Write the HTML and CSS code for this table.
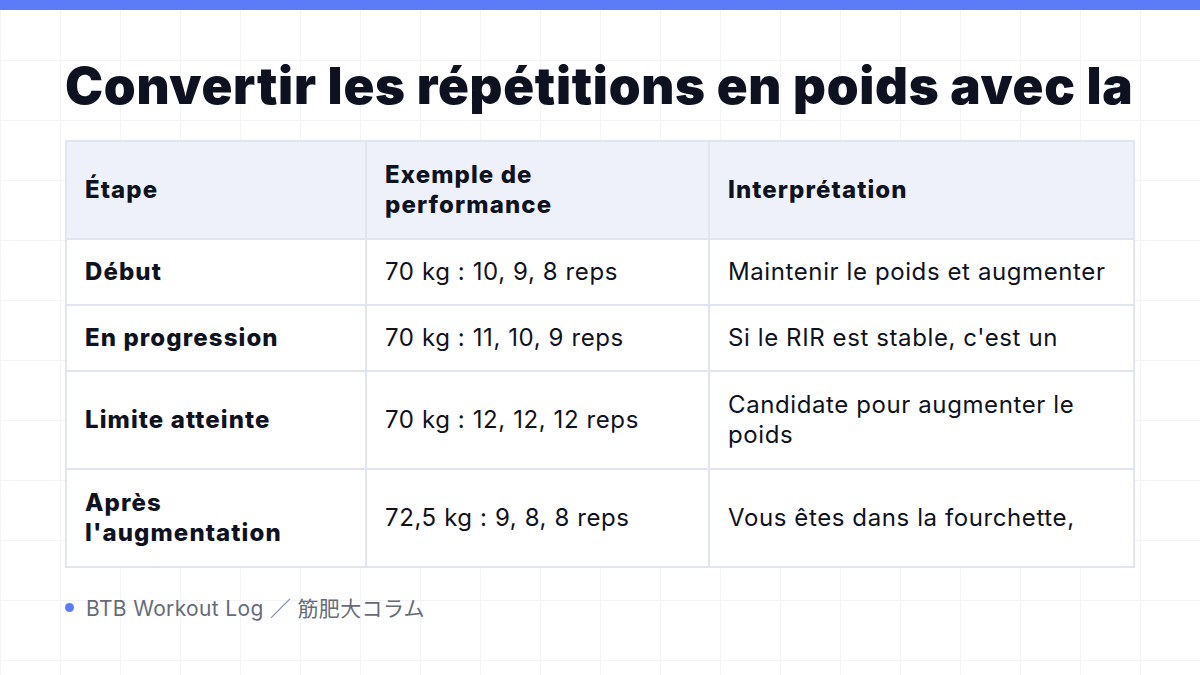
FILE: index.html
```html
<!DOCTYPE html>
<html lang="fr">
<head>
<meta charset="utf-8">
<link rel="stylesheet" href="styles.css">
</head>
<body>
<div class="topbar"></div>
<main class="slide">
  <h1 class="title">Convertir les répétitions en poids avec la</h1>
  <table class="grid-table">
    <colgroup>
      <col class="c1"><col class="c2"><col class="c3">
    </colgroup>
    <thead>
      <tr><th>Étape</th><th>Exemple de<br>performance</th><th>Interprétation</th></tr>
    </thead>
    <tbody>
      <tr class="short"><td class="stage">Début</td><td>70 kg : 10, 9, 8 reps</td><td>Maintenir le poids et augmenter</td></tr>
      <tr class="short"><td class="stage">En progression</td><td>70 kg : 11, 10, 9 reps</td><td>Si le RIR est stable, c'est un</td></tr>
      <tr><td class="stage">Limite atteinte</td><td>70 kg : 12, 12, 12 reps</td><td>Candidate pour augmenter le<br>poids</td></tr>
      <tr><td class="stage">Après<br>l'augmentation</td><td>72,5 kg : 9, 8, 8 reps</td><td>Vous êtes dans la fourchette,</td></tr>
    </tbody>
  </table>
  <footer class="source"><span class="dot"></span><span>BTB Workout Log ／ 筋肥大コラム</span></footer>
</main>
</body>
</html>
```
FILE: styles.css
```css
html, body {
  margin: 0;
  padding: 0;
}
body {
  width: 1200px;
  height: 675px;
  overflow: hidden;
  background-color: #ffffff;
  background-image:
    linear-gradient(to right, #f2f4f8 1px, transparent 1px),
    linear-gradient(to bottom, #f2f4f8 1px, transparent 1px);
  background-size: 60px 60px;
  background-position: 0 0;
  font-family: Inter, "Noto Sans CJK JP", sans-serif;
  color: #0f1220;
}
.topbar {
  height: 10px;
  background: #5b7cf6;
}
.slide {
  padding: 0 65px;
  display: flex;
  flex-direction: column;
}
.title {
  margin: 46px 0 0;
  height: 84px;
  font-size: 51px;
  line-height: 60px;
  font-weight: 900;
  letter-spacing: 0.72px;
  white-space: nowrap;
  overflow: hidden;
  color: #0d1120;
}
.grid-table {
  width: 1068px;
  border-collapse: collapse;
  table-layout: fixed;
  background: #ffffff;
  font-size: 24px;
  line-height: 30px;
  letter-spacing: 0.6px;
}
.c1 { width: 300px; }
.c2 { width: 343px; }
.c3 { width: 425px; }
.grid-table th,
.grid-table td {
  border: 2px solid #e0e5f0;
  padding: 17px 18px;
  text-align: left;
  vertical-align: middle;
  color: #0f1220;
}
.grid-table th {
  background: #eef1fa;
  font-weight: 800;
  letter-spacing: 1.1px;
  height: 62px;
}
.grid-table td {
  font-weight: 400;
  height: 62px;
}
.grid-table tr.short td {
  height: 30px;
}
.grid-table td.stage {
  font-weight: 800;
  letter-spacing: 1.1px;
}
.source {
  margin-top: 24px;
  display: flex;
  align-items: center;
  gap: 12px;
  font-size: 21px;
  letter-spacing: 0.35px;
  color: #656b79;
}
.dot {
  width: 9px;
  height: 9px;
  border-radius: 50%;
  background: #5b7cf6;
}
```
